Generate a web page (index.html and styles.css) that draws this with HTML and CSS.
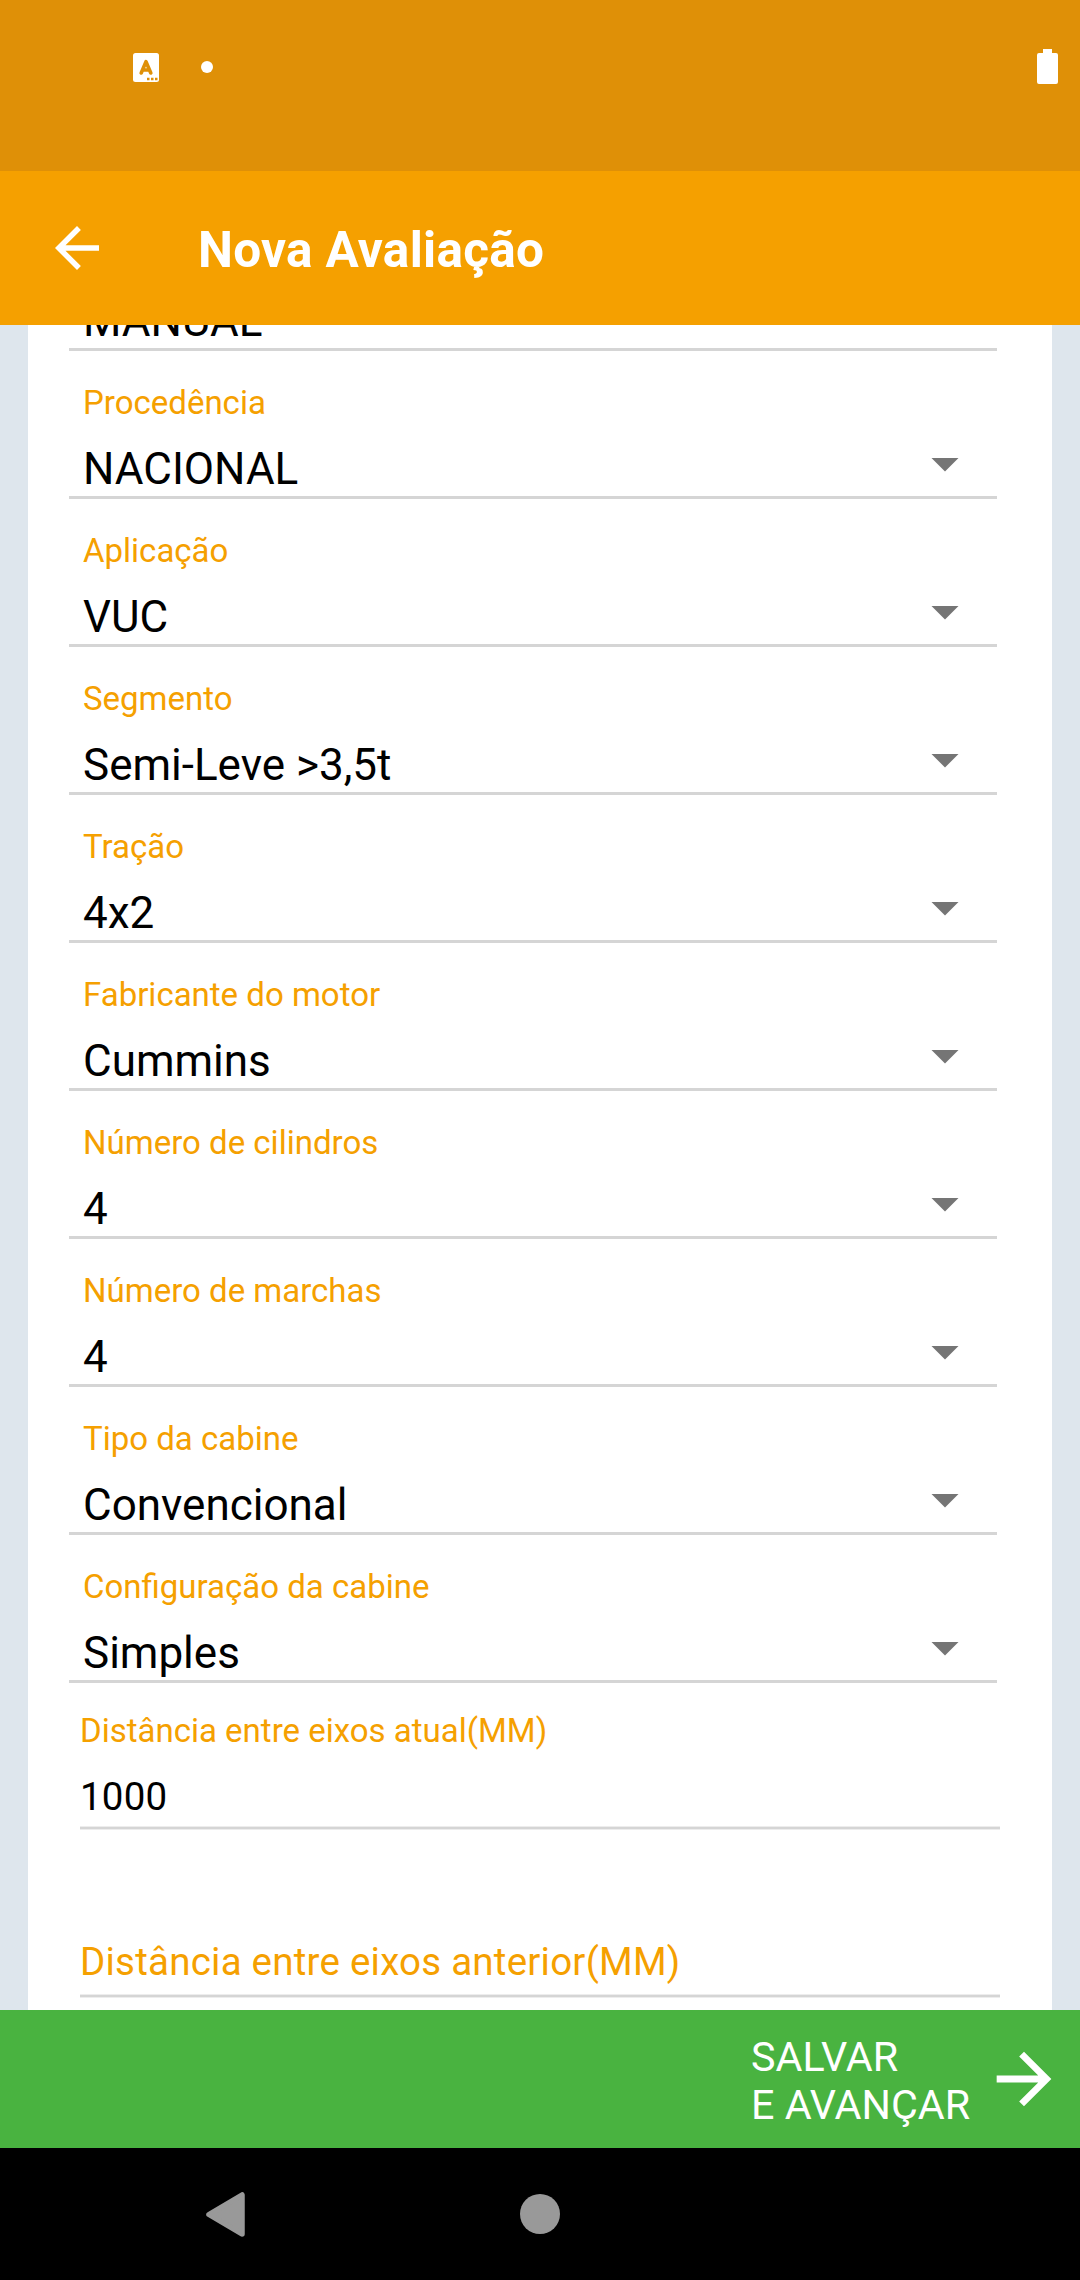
FILE: index.html
```html
<!DOCTYPE html>
<html lang="pt-BR">
<head>
<meta charset="utf-8">
<title>Nova Avaliação</title>
<link rel="stylesheet" href="styles.css">
</head>
<body>
<div class="screen">
  <div class="status">
    <svg class="status-app" width="26" height="29" viewBox="0 0 26 29"><rect width="26" height="29" rx="2.5" fill="#fff"/><path d="M8.2 20L13 8.700L17.800 20M10 17H16" fill="none" stroke="#df9007" stroke-width="3.600" stroke-linecap="round" stroke-linejoin="round"/><path d="M14 26h2.500m1.500 0h2.500m1.500 0h2.500" stroke="#df9007" stroke-width="2.400"/></svg>
    <span class="status-dot"></span>
    <svg class="status-battery" width="21" height="36" viewBox="0 0 21 36"><path d="M6 0h9v4h4a2 2 0 0 1 2 2v27a2 2 0 0 1-2 2H2a2 2 0 0 1-2-2V6a2 2 0 0 1 2-2h4z" fill="#fff"/></svg>
  </div>
  <header class="appbar">
    <svg width="66" height="66" viewBox="0 0 24 24" fill="#fff"><path d="M20 11H7.830l5.590-5.590L12 4l-8 8 8 8 1.410-1.410L7.830 13H20v-2z"/></svg>
    <h1 class="title">Nova Avaliação</h1>
  </header>
  <main class="content">
    <form class="card">
      <div class="select select-cut"><span class="value">MANUAL</span></div>
      <div class="select"><span class="label">Procedência</span><span class="value">NACIONAL<i class="caret"></i></span></div>
      <div class="select"><span class="label">Aplicação</span><span class="value">VUC<i class="caret"></i></span></div>
      <div class="select"><span class="label">Segmento</span><span class="value">Semi-Leve &gt;3,5t<i class="caret"></i></span></div>
      <div class="select"><span class="label">Tração</span><span class="value">4x2<i class="caret"></i></span></div>
      <div class="select"><span class="label">Fabricante do motor</span><span class="value">Cummins<i class="caret"></i></span></div>
      <div class="select"><span class="label">Número de cilindros</span><span class="value">4<i class="caret"></i></span></div>
      <div class="select"><span class="label">Número de marchas</span><span class="value">4<i class="caret"></i></span></div>
      <div class="select"><span class="label">Tipo da cabine</span><span class="value">Convencional<i class="caret"></i></span></div>
      <div class="select"><span class="label">Configuração da cabine</span><span class="value">Simples<i class="caret"></i></span></div>
      <div class="input"><span class="label">Distância entre eixos atual(MM)</span><span class="entry">1000</span></div>
      <div class="input input-empty"><span class="hint">Distância entre eixos anterior(MM)</span></div>
    </form>
  </main>
  <footer class="save">
    <span class="save-text">SALVAR<br>E AVANÇAR</span>
    <svg width="82" height="82" viewBox="0 0 24 24" fill="#fff"><path d="M12 4l-1.410 1.410L16.170 11H4v2h12.170l-5.580 5.590L12 20l8-8z"/></svg>
  </footer>
  <nav class="nav">
    <svg class="nav-back" width="39" height="45" viewBox="0 0 39 45"><path d="M3 22.500L36 3V42z" fill="#999" stroke="#999" stroke-width="5.500" stroke-linejoin="round"/></svg>
    <span class="nav-home"></span>
  </nav>
</div>
</body>
</html>
```
FILE: styles.css
```css
* { box-sizing: border-box; }
body { margin: 0; font-family: Roboto, sans-serif; color: #000; }
svg { display: block; flex: none; }
.screen { width: 1080px; height: 2280px; display: flex; flex-direction: column; overflow: hidden; }

.status { height: 171px; flex: none; background: #df9007; display: flex; align-items: flex-start; padding: 49px 22px 0 133px; }
.status-app { margin-top: 4px; }
.status-dot { width: 12px; height: 12px; border-radius: 50%; background: #fff; margin: 12px 0 0 42px; }
.status-battery { margin-left: auto; }

.appbar { height: 154px; flex: none; background: #f5a000; display: flex; align-items: center; padding-left: 44px; }
.title { margin: 4px 0 0 88px; font-size: 49.5px; line-height: 58px; font-weight: 700; letter-spacing: 0.3px; color: #fff; white-space: nowrap; }

.content { height: 1685px; flex: none; background: #dee6ed; padding: 0 28px; overflow: hidden; }
.card { height: 100%; background: #fff; display: flex; flex-direction: column; }

.select { height: 148px; flex: none; margin: 0 55px 0 41px; padding: 32px 0 1px 14px; border-bottom: 3px solid #d5d5d5; display: flex; flex-direction: column; gap: 20px; }
.select-cut { height: 26px; padding-top: 0; justify-content: flex-end; overflow: hidden; }
.label { font-size: 33px; line-height: 40px; color: #f5a000; white-space: nowrap; }
.value { font-size: 44px; line-height: 52px; flex: none; display: flex; justify-content: space-between; }
.caret { width: 28px; height: 14px; margin: 14.5px 38px 0 0; background: #757575; clip-path: polygon(0 0, 100% 0, 50% 100%); }

.input { height: 147px; flex: none; margin: 0 52px; padding-top: 28px; display: flex; flex-direction: column; gap: 23px;
  background: linear-gradient(#ededed 0 1px, #d5d5d5 1px 3px, #ededed 3px) bottom / 100% 4px no-repeat; }
.entry, .hint { font-size: 38.5px; line-height: 46px; letter-spacing: 0.23px; white-space: nowrap; }
.hint { color: #f5a000; }
.input-empty { height: 168px; padding-top: 109px; }

.save { height: 138px; flex: none; background: #49b340; color: #fff; display: flex; justify-content: flex-end; align-items: center; padding-right: 15px; }
.save-text { width: 232px; font-size: 41.25px; line-height: 48px; white-space: nowrap; padding-top: 4px; }

.nav { height: 132px; flex: none; background: #000; display: flex; align-items: flex-start; padding: 44px 0 0 206px; }
.nav-home { width: 40px; height: 40px; border-radius: 50%; background: #999; margin: 2px 0 0 275px; }
```
